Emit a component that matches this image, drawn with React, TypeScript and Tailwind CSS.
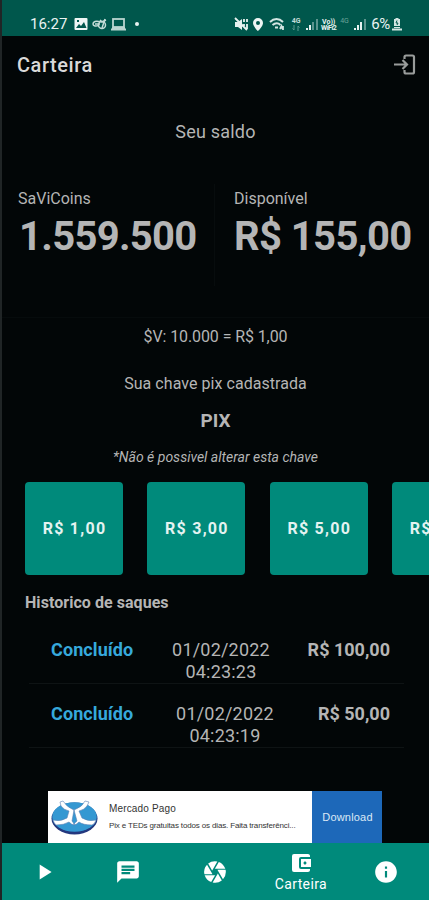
import React from "react";
import {
  MdAccountBalanceWallet,
  MdCamera,
  MdChat,
  MdInfo,
  MdPlayArrow,
} from "react-icons/md";

const AMOUNTS = ["R$ 1,00", "R$ 3,00", "R$ 5,00", "R$ 7,00"];

const SignalIcon = ({ bars }: { bars: number }) => (
  <svg width="13" height="13" viewBox="0 0 13 13" fill="#e6f1ef">
    <rect x="0" y="10" width="2" height="2" />
    <rect x="3" y="7" width="2" height="5" opacity={bars > 1 ? 1 : 0.4} />
    <rect x="6" y="4" width="2" height="8" opacity={bars > 2 ? 1 : 0.4} />
    <rect x="10" y="1" width="2" height="11" opacity="0.4" />
  </svg>
);

const StatusBar = () => (
  <div className="flex h-9 items-end bg-[#00574c] pb-[3px] text-[#e9f3f1]">
    <span className="ml-[28px] w-[44px] text-[15px] leading-[17px]">16:27</span>
    <svg width="14" height="16" viewBox="0 0 14 16">
      <rect x="0.5" y="1" width="13" height="12" rx="1" fill="#eef6f4" />
      <path d="M2 11l3-4 2 2 3-4 2.500 6z" fill="#00574c" />
      <rect x="3" y="3" width="2" height="2" fill="#00574c" />
    </svg>
    <svg
      className="ml-[4px]"
      width="15"
      height="16"
      viewBox="0 0 15 16"
      fill="none"
      stroke="#c3dcd7"
      strokeWidth="1.500"
    >
      <path d="M8 5C4 3 1 5 1 7s3 3 6 1M3 7h5M8 3l2 2 4-2" />
      <circle cx="10" cy="8" r="3.500" />
      <path d="M10 11l3-9" />
    </svg>
    <svg
      className="ml-[4px]"
      width="15"
      height="16"
      viewBox="0 0 15 16"
      fill="none"
      stroke="#b9d5d0"
      strokeWidth="1.800"
    >
      <rect x="2" y="2" width="11" height="8" />
      <path d="M0 12.500h15M1 11h13" />
    </svg>
    <span className="mb-[7px] ml-[9px] size-1 rounded-full bg-[#e9f3f1]" />

    <div className="mr-[27px] ml-auto flex items-end">
      <svg width="14" height="16" viewBox="0 0 14 16" fill="#e6f1ef">
        <path d="M1 5h3l4-3v11l-4-3H1z" />
        <path
          d="M1 1l12 12M10 2v3M10 7v2M13 2v3M13 7v5"
          stroke="#e6f1ef"
          strokeWidth="1.800"
        />
      </svg>
      <svg
        className="ml-[4px]"
        width="12"
        height="16"
        viewBox="0 0 12 16"
        fill="#eef6f4"
      >
        <path
          fillRule="evenodd"
          d="M6 1a5 5 0 0 0-5 5c0 3.500 5 8 5 8s5-4.500 5-8a5 5 0 0 0-5-5zm0 3a2 2 0 1 1 0 4 2 2 0 0 1 0-4z"
        />
      </svg>
      <svg
        className="ml-[5px]"
        width="17"
        height="16"
        viewBox="0 0 17 16"
        fill="none"
        stroke="#d3e5e2"
        strokeWidth="2"
      >
        <path d="M1 5c4-4 9-4 13 0M3.500 8c3-2.500 5.500-2.500 8 0" />
        <path d="M6 10.500h3M11 12l1.500-3 1 3M14 9v4" strokeWidth="1.800" />
      </svg>
      <div className="mb-[1px] ml-[4px] flex h-4 w-[12px] flex-col items-center pt-[2px]">
        <span className="text-[7px] leading-[7px] font-bold text-[#c3dcd7]">
          4G
        </span>
        <svg width="8" height="6" viewBox="0 0 8 6" stroke="#5b9a90">
          <path d="M2 0v5M0.500 3.500L2 5M6 6V1M6 1l1.500 1.500" />
        </svg>
      </div>
      <div className="mb-[2px] ml-[4px]">
        <SignalIcon bars={2} />
      </div>
      <div className="ml-[1px] flex w-[17px] flex-col items-center pb-[2px] text-[7px] leading-[6px] font-bold">
        <span>Vo))</span>
        <span className="tracking-[-0.5px]">WiFi2</span>
      </div>
      <span className="mb-[8px] ml-[3px] w-[10px] text-[7px] leading-[7px] text-[#69a399]">
        4G
      </span>
      <div className="mb-[2px] ml-[4px]">
        <SignalIcon bars={3} />
      </div>
      <span className="ml-[4px] text-[15px] leading-[17px] tracking-[-0.3px]">
        6%
      </span>
      <svg
        className="ml-[2px]"
        width="10"
        height="16"
        viewBox="0 0 10 16"
        fill="#d3e5e2"
      >
        <path d="M3.500 1h3v1H8v7H2V2h1.500zM0 11.500h10v2H0zM2 10h6v1H2z" />
        <path d="M5 3.500L4 6h2L5 8" stroke="#00574c" fill="none" />
      </svg>
    </div>
  </div>
);

const Header = () => (
  <header className="flex h-[58px] items-center justify-between pr-[13px] pl-[15px]">
    <h1 className="text-[20px] font-medium tracking-[0.55px] text-[#d9d9d9]">
      Carteira
    </h1>
    <svg
      width="23"
      height="22"
      viewBox="0 0 23 22"
      fill="none"
      stroke="#999c9b"
      strokeWidth="2.200"
    >
      <path d="M1 10.500h13M9.500 6l4.500 4.500-4.500 4.500" />
      <path d="M11.500 5V3q0-1.500 1.500-1.500h6.500q1.500 0 1.500 1.500v15q0 1.500-1.500 1.500H13q-1.500 0-1.500-1.500v-2" />
    </svg>
  </header>
);

const Balance = () => (
  <section className="flex h-[224px] flex-col border-b border-[#060b0c]">
    <h2 className="mt-[26px] text-center text-[18px] leading-[24px] tracking-[0.2px]">
      Seu saldo
    </h2>
    <div className="mt-[40px] flex h-[102px]">
      <div className="w-[213px] border-r border-[#070c0d] pl-[16px]">
        <p className="pt-[5px] text-[16px] leading-[20px]">SaViCoins</p>
        <p className="pt-px pl-px text-[40px] leading-[54px] font-bold tracking-[-0.7px]">
          1.559.500
        </p>
      </div>
      <div className="pl-[19px]">
        <p className="pt-[5px] text-[16px] leading-[20px]">Disponível</p>
        <p className="pt-px text-[40px] leading-[54px] font-bold tracking-[-0.6px] whitespace-nowrap">
          R$ 155,00
        </p>
      </div>
    </div>
  </section>
);

const PixInfo = () => (
  <section className="flex h-[164px] flex-col items-center pt-[8px]">
    <p className="text-[16px] leading-[22px] tracking-[-0.1px]">
      $V: 10.000 = R$ 1,00
    </p>
    <p className="mt-[25px] text-[16px] leading-[22px] tracking-[0.05px]">
      Sua chave pix cadastrada
    </p>
    <p className="mt-[13px] text-[19px] leading-[26px] font-bold">PIX</p>
    <p className="mt-[14px] text-[14px] leading-[18px] italic">
      *Não é possivel alterar esta chave
    </p>
  </section>
);

const AmountList = () => (
  <div className="flex gap-[24.4px] overflow-hidden pl-[23px]">
    {AMOUNTS.map((amount) => (
      <button
        key={amount}
        className="h-[93px] w-[98px] flex-none rounded-[4px] bg-[#008a7b] pl-px text-[16px] font-bold tracking-[1.25px] whitespace-nowrap text-[#e4f3f1]"
      >
        {amount}
      </button>
    ))}
  </div>
);

const HistoryRow = ({
  hour,
  amount,
  dateClass,
}: {
  hour: string;
  amount: string;
  dateClass: string;
}) => (
  <li className="flex h-16 border-b border-[#0e1314] pt-[19px] pr-[14px] pl-[22px] text-[18px] leading-[22px]">
    <span className="w-[85px] font-bold tracking-[0.1px] text-[#36a9dc]">
      Concluído
    </span>
    <span className={dateClass}>
      01/02/2022
      <br />
      {hour}
    </span>
    <span className="ml-auto font-bold">{amount}</span>
  </li>
);

const History = () => (
  <section className="mt-[17px] h-[199px] pr-[25px] pl-[23px]">
    <h3 className="text-[16px] leading-[22px] font-bold tracking-[0.05px]">
      Historico de saques
    </h3>
    <ul className="ml-[4px] h-[150px] pt-[6px]">
      <HistoryRow
        hour="04:23:23"
        amount="R$ 100,00"
        dateClass="ml-[34px] w-[102px] text-center tracking-[0.2px]"
      />
      <HistoryRow
        hour="04:23:19"
        amount="R$ 50,00"
        dateClass="ml-[38px] w-[102px] text-center tracking-[0.2px]"
      />
    </ul>
  </section>
);

const AdBanner = () => (
  <div className="ml-[46px] flex h-[52px] w-[334px] bg-white font-['Liberation_Sans',sans-serif]">
    <svg
      className="mt-[9px] ml-[3px] flex-none"
      width="47"
      height="36"
      viewBox="0 0 47 36"
    >
      <ellipse cx="23.500" cy="18.500" rx="23" ry="16" fill="#23377e" />
      <ellipse cx="23.500" cy="17" rx="22.300" ry="14.800" fill="#3498d2" />
      <path
        d="M2 20q8 2 14-2l2-7q-5-1-8-5l-1-4 3-1q4 6 9 8l2 1-2 11q2 2 2 4 0-2 3-4l-3-11 2-1q6-2 9-8l4 1-2 4q-3 4-8 5l3 7q6 4 14 2-1 4-4 5-9 0-13-3-3 3-5 3-2 0-5-3-5 3-13 3-2-2-3-5z"
        fill="#fff"
        stroke="#5b7fb4"
        strokeWidth="0.600"
      />
    </svg>
    <div className="ml-[11px] w-[203px] flex-none text-[#333]">
      <p className="pt-[12px] text-[10px] leading-[12px] tracking-[0.15px]">
        Mercado Pago
      </p>
      <p className="pt-[6px] text-[8px] leading-[10px] tracking-[-0.15px] whitespace-nowrap">
        Pix e TEDs gratuitas todos os dias. Faita transferênci...
      </p>
    </div>
    <div className="flex flex-1 items-center justify-center bg-[#1d68b9] pl-px text-[11px] tracking-[0.2px] text-[#dbe8f6]">
      Download
    </div>
  </div>
);

const BottomNav = () => (
  <nav className="grid h-[57px] grid-cols-5 items-center bg-[#008a7b] text-white">
    <MdPlayArrow className="ml-[29px] size-[26px]" />
    <MdChat className="ml-[28px] size-[26px]" />
    <MdCamera className="mx-auto size-[26px]" />
    <div className="flex flex-col items-center pt-px">
      <MdAccountBalanceWallet className="size-[24px]" />
      <span className="text-[14px] leading-[18px] tracking-[0.4px]">
        Carteira
      </span>
    </div>
    <MdInfo className="mx-auto size-[26px]" />
  </nav>
);

const App = () => {
  return (
    <main className="h-[900px] w-[429px] overflow-hidden border-l-2 border-[#202526] bg-[#020607] font-[Roboto,sans-serif] text-[#b5b5b5]">
      <StatusBar />
      <Header />
      <Balance />
      <PixInfo />
      <AmountList />
      <History />
      <AdBanner />
      <BottomNav />
    </main>
  );
};

export default App;
